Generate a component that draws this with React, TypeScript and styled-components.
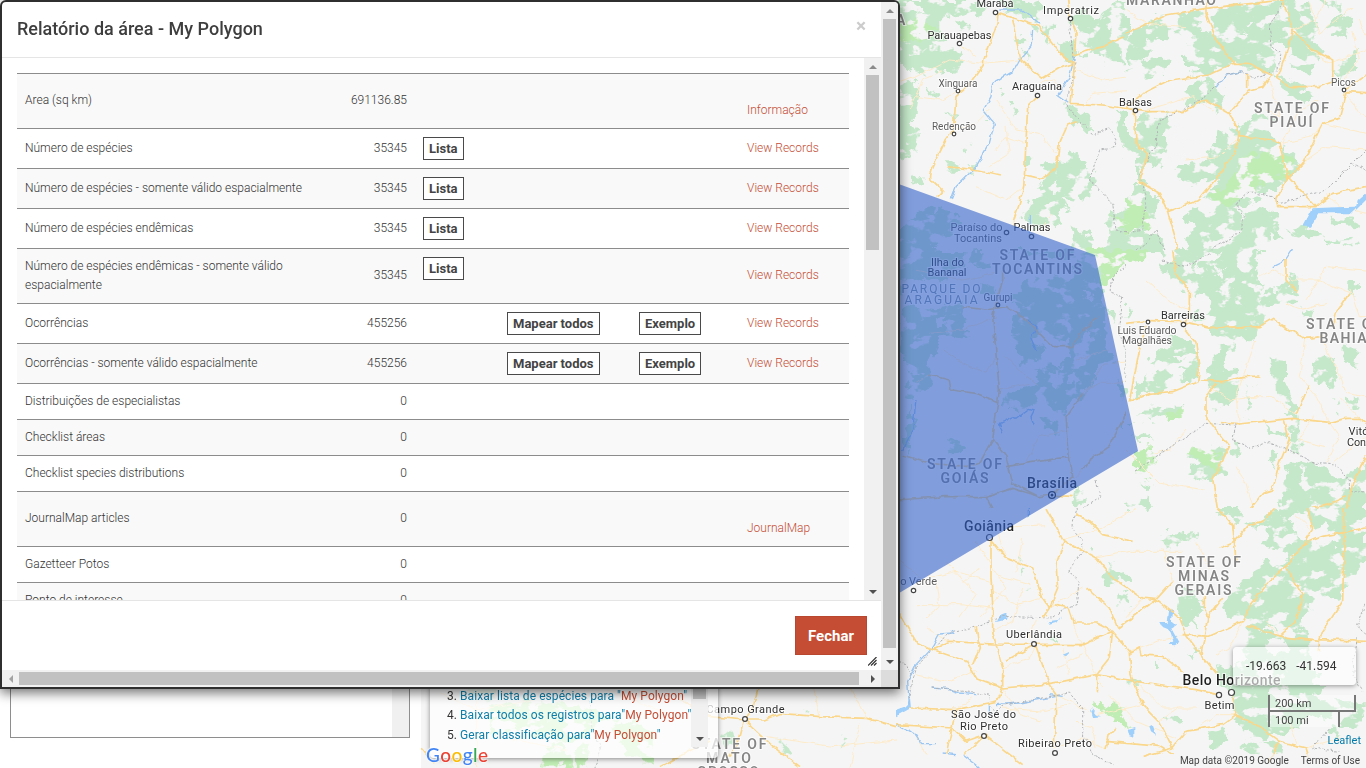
import React from "react";
import styled, { createGlobalStyle } from "styled-components";

const Global = createGlobalStyle`
  * { box-sizing: border-box; }
  body { margin: 0; overflow: hidden; background: #fff; font-family: Roboto, "Liberation Sans", sans-serif; color: #3e3e3e; }
`;

/* ---------- page ---------- */
const Page = styled.div`
  position: relative;
  display: flex;
  width: 1366px;
  height: 768px;
  overflow: hidden;
`;
const SidePanel = styled.aside`
  display: flex;
  align-items: flex-end;
  width: 421px;
  padding: 0 11px 30px 10px;
  background: #fff;
`;
const LayerList = styled.div`
  display: flex;
  justify-content: flex-end;
  width: 400px;
  height: 300px;
  border: 1px solid #8e8e8e;
`;
const LayerTrack = styled.div`
  width: 17px;
  background: #f0f0f0;
`;
const MapPane = styled.main`
  position: relative;
  flex: 1;
  overflow: hidden;
`;
const MapCanvas = styled.svg`
  display: block;
  width: 945px;
  height: 768px;
  font-family: Roboto, sans-serif;
`;

/* ---------- map controls ---------- */
const StepsPanel = styled.div`
  position: absolute;
  left: 9px;
  bottom: 10px;
  display: flex;
  justify-content: space-between;
  width: 288px;
  height: 130px;
  padding: 0 10px 11px 17px;
  background: rgba(255, 255, 255, 0.72);
  border-radius: 4px;
  box-shadow: 0 1px 5px rgba(0, 0, 0, 0.45);
`;
const Steps = styled.ol`
  display: flex;
  flex-direction: column;
  justify-content: flex-end;
  margin: 0;
  padding: 0 0 2px;
  list-style: none;
  font-size: 12px;
  line-height: 19.5px;
  letter-spacing: 0.07px;
  color: #333;
  white-space: nowrap;
`;
const StepLink = styled.span`
  color: #0e7ea9;
`;
const AreaName = styled.span`
  color: #c44d34;
`;
const Num = styled.span`
  display: inline-block;
  width: 13px;
`;
const Position = styled.div`
  position: absolute;
  left: 812px;
  top: 647px;
  display: flex;
  align-items: center;
  gap: 10px;
  width: 123px;
  height: 38px;
  padding-left: 13px;
  background: rgba(255, 255, 255, 0.62);
  border-radius: 4px;
  box-shadow: 0 1px 5px rgba(0, 0, 0, 0.4);
  font-size: 12px;
  color: #333;
`;
const Scale = styled.div`
  position: absolute;
  left: 847px;
  top: 695px;
  font: 11px/11px Roboto, sans-serif;
  color: #444;
`;
const ScaleLine = styled.div<{ $w: number; $first?: boolean }>`
  width: ${(p) => p.$w}px;
  height: ${(p) => (p.$first ? 17 : 15)}px;
  padding: ${(p) => (p.$first ? "3px 5px" : "3px 5px")};
  border: 2px solid #777;
  border-width: ${(p) => (p.$first ? "0 2px 2px" : "0 2px 0")};
  background: rgba(255, 255, 255, 0.4);
`;
const Logo = styled.div`
  position: absolute;
  left: 5px;
  bottom: 1px;
  font: 500 19px/24px Lato, sans-serif;
  letter-spacing: 0.45px;
  text-shadow: 0 0 2px #fff, 0 0 2px #fff, 0 0 2px #fff;
`;
const Tint = styled.span<{ $c: string }>`
  color: ${(p) => p.$c};
`;
const Credits = styled.div`
  position: absolute;
  right: 0;
  bottom: 0;
  display: flex;
  flex-direction: column;
  align-items: flex-end;
`;
const LeafletLink = styled.div`
  padding: 0 5px 3px;
  font-size: 11px;
  line-height: 20px;
  color: #0078a8;
`;
const Terms = styled.div`
  display: flex;
  gap: 12px;
  height: 14px;
  padding: 0 6px;
  font-size: 10px;
  line-height: 13px;
  background: rgba(245, 245, 245, 0.65);
  color: #444;
`;

/* ---------- dialog ---------- */
const Dialog = styled.section`
  position: absolute;
  left: 0;
  top: 0;
  display: grid;
  grid-template-columns: 879px 17px;
  grid-template-rows: 668px 17px;
  width: 900px;
  height: 689px;
  border: 2px solid #2f2f2f;
  border-radius: 6px 6px 0 0;
  background: #fff;
  box-shadow: 0 4px 12px rgba(0, 0, 0, 0.55);
  overflow: hidden;
`;
const Content = styled.div`
  display: flex;
  flex-direction: column;
  min-width: 0;
`;
const Header = styled.header`
  display: flex;
  justify-content: space-between;
  height: 56px;
  padding: 15px;
  border-bottom: 1px solid #e5e5e5;
`;
const Title = styled.h4`
  margin: 0;
  font-size: 18px;
  font-weight: 500;
  line-height: 24px;
  color: #3e3e3e;
`;
const Close = styled.button`
  border: 0;
  padding: 0;
  height: 18px;
  background: none;
  font: 700 19px/18px Roboto, sans-serif;
  color: #ccc;
`;
const Body = styled.div`
  display: grid;
  grid-template-columns: 862px 17px;
  height: 542px;
`;
const Report = styled.div`
  height: 542px;
  padding: 15px;
  overflow: hidden;
`;
const Row = styled.div<{ $h: number; $odd: boolean }>`
  display: grid;
  grid-template-columns: 318px 80px 84px 132px 108px 110px;
  height: ${(p) => p.$h}px;
  border-top: 1px solid #8c8c8c;
  background: ${(p) => (p.$odd ? "#f9f9f9" : "#fff")};
`;
const Cell = styled.div<{ $right?: boolean; $low?: boolean }>`
  display: flex;
  align-items: center;
  justify-content: ${(p) => (p.$right ? "flex-end" : "flex-start")};
  padding: ${(p) => (p.$low ? "19px 8px 0" : "0 8px 1px")};
  font-size: 12px;
  font-weight: 300;
  line-height: 19px;
  color: #333;
`;
const ActionCell = styled.div`
  padding: 8px;
`;
const RecordLink = styled.span`
  color: #c44d34;
`;
const SmallButton = styled.button`
  display: block;
  height: 23px;
  padding: 0 5px;
  border: 1px solid #4a4a4a;
  background: #fff;
  font: 700 13px/21px Roboto, sans-serif;
  color: #444;
  white-space: nowrap;
`;
const Footer = styled.footer`
  display: flex;
  flex: 1;
  align-items: flex-start;
  justify-content: flex-end;
  padding: 15px 14px 0;
  border-top: 1px solid #e5e5e5;
`;
const CloseButton = styled.button`
  width: 72px;
  height: 39px;
  padding: 0;
  border: 1px solid #b9462f;
  background: #c44d34;
  font: 700 15px Roboto, sans-serif;
  color: #fff;
`;
const Track = styled.div<{ $row?: boolean }>`
  display: flex;
  flex-direction: ${(p) => (p.$row ? "row" : "column")};
  align-items: center;
  background: #f1f1f1;
`;
const ArrowBox = styled.div<{ $end?: boolean }>`
  display: flex;
  align-items: center;
  justify-content: center;
  width: 17px;
  height: 17px;
  margin-left: ${(p) => (p.$end ? "auto" : 0)};
`;
const Thumb = styled.div<{ $w: number; $h: number }>`
  width: ${(p) => p.$w}px;
  height: ${(p) => p.$h}px;
  background: #c1c1c1;
`;
const Spring = styled.div`
  flex: 1;
`;
const Corner = styled.div`
  background: #dcdcdc;
`;
const Grip = styled.svg`
  position: absolute;
  left: 866px;
  top: 655px;
`;

const arrows = {
  up: "M0 6L4 2L8 6Z",
  down: "M0 2L4 6L8 2Z",
  left: "M6 0L2 4L6 8Z",
  right: "M2 0L6 4L2 8Z",
};
const Arrow = ({ dir, fill = "#505050" }: { dir: keyof typeof arrows; fill?: string }) => (
  <svg width="8" height="8"><path d={arrows[dir]} fill={fill} /></svg>
);

/* ---------- map drawing ---------- */
type TileData = {
  x: number; y: number; w: number; h: number;
  green: string; light?: string; clear?: string; water?: string; river?: string; road: string; minor: string; border?: string;
};

const tiles: TileData[] = [
  {
    x: 896, y: 0, w: 690, h: 750,
    green: "M0 0H230L270 20L240 45L180 55L150 40L130 50L130 90L190 150L200 190L180 215L140 210L60 220L20 190L0 180ZM0 240L40 240L70 260L60 340L40 360L70 400L60 450L30 480L0 500ZM310 0H400L440 20L425 60L370 50L330 35ZM540 30L580 40L600 60L640 20L720 0V130L670 150L690 190L640 190L600 160L550 165L530 120L560 90L520 60ZM490 130L540 120L540 190L500 180ZM180 65L220 70L215 95L190 85ZM90 262L125 275L110 290ZM310 265L335 275L320 290ZM340 300L370 320L355 345ZM200 445L225 435L215 460ZM50 515L78 525L70 545L45 540ZM385 465L415 470L400 490L385 490ZM410 75L470 80L460 130L430 100ZM450 480L510 490L520 450L560 470L600 560L570 600L500 590L520 620L490 650L480 680L410 690L380 650L410 590L450 540L435 510ZM530 680L560 700L600 690L600 770L540 740ZM500 300L560 340L600 380L570 400L520 350ZM660 330L720 350V640L690 620L700 500L670 400ZM640 630L720 640V780H600L640 720ZM260 340L275 355L265 365ZM340 110L375 105L385 130L350 130ZM380 155L405 170L390 190ZM150 340L180 345L170 370ZM150 490L240 490L230 515L170 515ZM0 700L60 640L130 620L200 650L160 700L60 780H0Z",
    light: "M10 75L60 60L130 85L90 120L10 115ZM640 640L720 655V700L670 690Z",
    clear: "M620 60L650 70L630 90ZM560 110L580 120L570 135ZM60 20L90 30L70 45ZM460 560L490 540L480 580Z",
    river: "M410 90L405 140L370 180L350 215L290 250L285 290L262 330L295 370L280 430L240 500L180 560L165 600M535 170L520 230L485 285L520 310M310 30L380 30L430 70M400 640V700",
    road: "M305 40C310 90 260 160 262 195L225 250L180 290L172 390L150 420C120 480 90 530 110 545L140 575L125 590M305 40L370 60L430 80L460 120L500 170L535 190L530 260L525 310L620 315L720 330M515 0L520 40L540 100L535 165L620 140L720 95M345 50L375 180L440 235L490 205L535 190M425 290L395 320L385 530C385 600 350 650 350 680M385 525L435 535L480 510L490 430L515 375L540 365M150 500L250 510L315 525",
    minor: "M0 250L60 230L160 180L260 190L370 180M190 270L140 300L60 290M300 300L360 390L430 400L480 460M330 380L340 460L280 500M385 430L330 410L300 450M540 210L620 240L700 230M560 320L590 280L720 270M180 390L240 370L280 330M430 250L470 240L500 270M190 130L240 170M140 215L80 240L40 330M380 560L330 600L240 560M470 640L440 680",
    border: "M520 60L530 160L540 190L510 310L540 350L590 405L640 385L660 420L650 445L610 450L580 540L650 610L660 690L720 700",
  },
  {
    x: 1126, y: 0, w: 720, h: 750,
    green: "M0 110L90 50L240 30L480 0H540L570 70L560 130L590 160L560 220L500 210L490 150L455 150L430 230L330 190L240 225L200 230L220 205L180 200L180 110L160 100L130 100L100 130L60 120L70 170L20 200L0 150ZM610 60L640 30L675 60L660 120L630 100L600 110L590 80ZM610 190L690 150V220L640 225ZM440 210L520 260L570 280L540 310L480 280ZM170 270L250 230L300 290L280 330L240 300L190 310ZM0 215L60 180L140 175L120 215L60 230ZM340 390L400 330L440 360L430 400L480 440L520 500L490 540L400 600L330 620L350 700L400 720V780H200L180 720L200 690L170 650L240 600L280 530L190 560L140 520L160 490L220 500L250 440L260 410L330 370ZM30 340L90 340L130 330L140 360L110 400L130 420L100 510L60 480L40 540L70 570L100 600L90 660L40 700L0 660V600L30 560L30 480L0 440V400L30 420ZM400 620L460 640L450 690L480 720L430 705L450 760L390 780H320L350 640ZM480 690L560 680L600 720L680 710L690 740L560 720ZM610 650L680 660L690 680L620 670ZM0 690L80 700L120 740L100 780H0ZM570 0H640V30L600 25Z",
    light: "M340 470L450 450L500 480L490 520L400 560L300 620L250 590L300 560ZM0 590L60 620L80 680L0 690Z",
    clear: "M220 60L260 55L260 90L225 95ZM360 70L380 75L370 85ZM140 370L250 380L265 440L200 490L130 490ZM200 560L240 540L230 590L190 600ZM440 130L465 125L470 150L445 155ZM350 100L370 95L360 110ZM350 225H410L400 260L370 268Z",
    water: "M720 578L695 600L690 620L630 622L560 625L530 680L555 680L580 640L680 640L720 600Z",
    river: "M350 215L300 225L270 265M500 745L480 780",
    road: "M0 100L120 45L240 25L380 10L470 0M240 0V40L270 120L325 190L250 225L130 240L60 275L0 325M325 190L370 190L435 225L410 260L370 270L310 340L240 300L170 335L60 335L0 325M470 0L500 90L480 160L455 235L490 260L580 260L620 245V180L560 150L500 90M365 225V265M310 340L340 400L330 450L270 540L220 600L125 635L100 580L40 545L65 465L30 430L25 330M125 635L150 720V780M340 410L440 420L460 430L485 530L570 620L455 620L450 600L485 535L530 490L590 370L640 355L660 275L720 278M570 620L620 580L720 560M660 265L720 225",
    minor: "M500 90L570 60L600 0M640 250L700 180L680 90M540 480L600 440L720 450M470 430L560 410L590 370L720 400M580 300L520 330L470 430M260 330L200 290L60 330M0 30L60 70L180 80M540 140L610 190L720 150M330 420L280 470L180 480M600 580L640 620L720 640M660 280L700 340L720 350M550 10L580 100L680 20M430 240L460 350L420 330M700 60L720 110",
    border: "M470 10L430 80L435 140L465 160L455 210L380 235L350 215L300 225L240 290L170 330L100 360L90 430L40 530L60 580L50 690L0 700M215 770L340 700L355 650L330 610L370 575L440 590L460 610L600 570L680 490L720 450M680 490L720 510M90 690L130 780M0 770L60 730L90 690",
  },
  {
    x: 896, y: 250, w: 690, h: 774,
    green: "M0 0H210L200 60L120 100L60 80L0 140ZM20 160L130 180L190 160L230 270L140 260L100 340L100 400L60 450L30 440L50 380L20 300ZM300 0H600L630 100L560 80L520 30ZM340 150L400 90L560 60L610 100L630 180L620 280L660 330L600 340L600 400L560 430L500 500L440 460L380 480L320 470L340 430L420 400L430 350L380 350L370 290L340 230L380 190ZM640 180L660 190L655 235ZM160 560L200 590L160 620ZM680 520L720 490V570L690 550ZM540 710L570 715L560 770L530 760ZM430 500L500 520L460 540ZM40 470L60 520L30 620L20 560ZM230 0H290L280 60L220 50ZM250 100L300 120L260 150ZM440 520L520 510L490 570ZM660 380L690 430L680 460Z",
    light: "M570 0H720L690 30L640 100L625 112L600 15Z",
    clear: "M430 290L460 270L520 280L530 320L490 350L440 340ZM560 120L590 130L570 160ZM120 200L160 200L140 220ZM450 370L490 360L480 420L460 400ZM520 370L545 380L530 420ZM560 240L590 250L570 280Z",
    river: "M320 550L310 520L350 500L360 505L400 475L415 480L405 500L415 525M395 210L420 230L405 265L420 300M60 450L50 540L20 600",
    road: "M320 60V90L290 200L310 420L290 570L330 620L350 700L430 740L468 735M200 170L270 180L330 170L390 210L470 290L530 290L550 250L610 200M100 375L160 390L165 420L240 430L305 455M290 570L250 640L220 650L100 640L20 615M330 650L390 640L520 620L510 500L560 430M0 750L150 740L270 740L350 715L430 740M560 660L580 630L640 590L690 490L720 450M520 620L530 680L468 735M720 360L705 450M270 740L290 780M468 735L530 740",
    minor: "M300 320L270 370L200 340L140 300M330 320L380 370L430 410M560 430L600 400L670 400L720 370M560 450L620 340L720 330M300 200L200 240L100 250M100 375L60 400M310 420L400 400M390 640L430 560L520 540M560 660L520 700L460 690M640 300L540 330M60 60L200 90L300 70",
    border: "M720 20L650 80L645 130L680 140L670 250L690 300L690 400M600 690L615 740L560 775",
  },
  {
    x: 1126, y: 250, w: 720, h: 774,
    green: "M110 0H390L400 100L410 140L420 120L500 110L520 150L420 170L400 250L380 270L360 240L230 230L180 190L260 180L250 150L190 130L110 60ZM490 70L520 75L515 115L480 120ZM670 90L690 100L688 140L668 130ZM90 320L150 260L210 280L220 380L140 410L30 440L20 400L60 380L110 360L70 340ZM240 230L400 230L360 280L340 270L310 310L300 350L340 370L340 420L320 470L270 480L240 460L260 400L240 370L280 290ZM440 320L480 330L480 400L510 460L520 500L520 610L490 590L500 500L450 420ZM570 320L630 330L640 390L620 440L580 400L560 380ZM650 280L700 300L690 370L650 330ZM170 620L230 580L310 600L300 650L260 700L180 670L220 640ZM480 650L500 625L560 640L600 660L650 690L720 640V780H460L470 700ZM20 520L70 470L170 470L150 500L90 510ZM375 400L382 410L370 500H360ZM420 520L470 550L470 570L430 545ZM440 600L455 610L440 650L430 630ZM610 420L640 450L640 490ZM660 440L700 450L690 480L660 470ZM310 590L345 580L335 630L320 620ZM530 170L570 190L560 210L530 200ZM20 560L60 550L90 570L30 570ZM50 700L80 710L60 730ZM20 740L70 750L50 780H0ZM0 160L0 210L20 180Z",
    light: "M0 0H80L50 30L0 35ZM30 600L80 590L85 650L60 690L20 650ZM110 500L170 475V495L120 510ZM180 610L220 590L290 610L280 660L220 640Z",
    clear: "M240 10L290 5L250 40L190 50ZM270 60L300 50L290 90ZM150 320L180 310L170 335ZM130 370L180 350L170 385ZM520 650L530 640L525 700ZM100 100L160 120L140 160L90 150Z",
    river: "M500 0L480 30L440 50",
    road: "M140 0L150 70L190 120L190 190L172 225M0 220L70 212L170 215L250 232L400 230L440 205L490 240L540 265L590 260M480 30V90L510 125M175 235L210 280L220 360L215 395L140 425L70 430L10 455L40 300L60 230M225 390L300 395L350 380L400 378M270 400L240 440V500L310 590L260 690L275 780M285 515L340 522L500 505L610 517L660 505L700 505L720 520M510 495L548 405M475 510L490 570L460 640L440 720L410 730L370 780M670 130L630 190L620 240M720 620L680 700L660 780M660 740L600 765L540 780",
    minor: "M400 80L440 60L500 90L580 90L620 110L680 130M590 260L600 300L640 370L660 430L720 440M610 517L570 440L520 380L540 265M480 160L530 180L600 160M510 495L440 440L350 440M340 522L330 440L390 270M700 505L640 440M60 90L140 160L190 180M180 540L130 600L80 610M330 650L360 700L380 770M600 640L640 560L610 517M540 150L600 50L720 60M0 600L100 700L240 720M620 640L720 560M250 410L310 450L400 440M670 110L700 200L720 200M560 500L520 570L600 590",
    border: "M110 30L180 50L250 10M30 660L60 640L240 520L330 525L320 570L370 595L430 575L500 605L570 640L630 645L670 690V720L720 730",
  },
  {
    x: 896, y: 508, w: 1410, h: 780,
    green: "M1150 0H1410V30L1380 40L1410 60V150L1360 210L1340 260L1260 280L1220 340L1190 400L1150 370L1100 360L1070 380L1040 330L1000 330L990 300L1000 260L1040 230L1100 160L1160 170L1180 130L1100 110L1120 60L1040 50L1110 30ZM1040 400L1060 360L1180 390L1220 350L1240 400L1240 470L1300 540L1240 560L1300 600L1200 660L1120 690L1050 680L1010 620L1000 480L1050 470ZM1240 580H1410V650L1330 660L1280 630ZM780 75L850 80L910 70L900 100L850 110L810 130L800 100ZM840 270L890 240L920 300L890 360L850 330ZM670 250L695 260L690 310L670 300ZM630 180L650 160L690 165L700 220L670 210L640 230L620 220ZM440 390L490 390L480 405ZM380 235L395 240L385 270ZM930 670L990 650L1000 700L950 720ZM800 620L860 625L840 660ZM1030 720L1060 690L1160 700L1150 745L1080 740ZM780 450L800 480L780 490ZM870 440L900 430L890 450ZM1300 660L1320 650L1330 700ZM960 0H1040L1030 40L990 20ZM370 150L380 155L375 165ZM380 180L395 190L380 205ZM960 480L1000 470V550L970 530ZM590 110L605 120L600 130ZM700 520L740 515L730 540L705 535Z",
    light: "M590 580L680 600L700 660L640 630Z",
    clear: "M1120 400L1160 390L1180 430L1120 440ZM1310 110L1330 120L1320 130ZM1140 540L1170 545L1160 580L1120 570ZM1180 20L1230 10L1250 60L1290 50L1330 90L1260 110L1200 90Z",
    water: "M820 305L832 310L828 340L840 350L825 360L850 405L840 412L818 410L832 400L820 365L795 355L790 345L815 345ZM310 325L335 315L330 335L300 342ZM455 340L490 335L495 325L480 345L460 350ZM500 440L525 430L510 445ZM0 605L30 595L42 570L45 600L0 625ZM585 600L600 620L615 625L590 628ZM695 665L715 660L715 690L700 685ZM760 655L770 650L780 680L765 670Z",
    river: "M40 590L35 520L60 470L110 415L130 378L170 375M165 365L175 380M110 540L160 545L190 555L240 560M280 590V620M300 590L370 585L480 565M0 650L60 680L80 710L120 710M140 735L180 740M200 740L250 780M460 560L500 565M400 0V30",
    road: "M285 100V210L290 290V370L320 480V540M285 95L330 150L410 180L440 270L460 300L440 330M450 0L500 95L600 150L650 210L740 270L780 275L850 330L870 380L915 440L965 500M505 95L480 170L485 240L460 300M470 290L520 300L535 345L600 345L650 370L705 435L730 420L735 440L800 445L860 490M575 240L640 300L665 360L780 275L830 220M10 315L60 400L110 425L210 460L240 510L320 540L440 530L500 520L600 500L720 520L900 545L965 560M110 425L160 400L290 408L560 410L650 370L640 450L600 500L605 550M240 355L250 420L230 470M420 415L460 530L480 560L475 720M415 410L330 460M700 430L705 500L740 590L790 640L830 720M540 20L580 40L620 80L710 100M935 330L925 300V260M860 380L940 385L1040 340L1050 310L1120 220L1170 175L1220 260L1200 340L1150 385L1050 350M915 440L935 330L980 270M1170 175L1220 110L1280 85L1410 60M1235 0L1250 60L1220 110M1340 0L1345 60L1340 280L1280 370L1270 400L1150 385M1270 395L1410 400M1270 400V430M965 0L1010 50L1015 100L1020 160M1015 100L970 120M1140 0L1100 40L1060 50L1015 100M40 600L180 605L300 580L320 540M180 605L150 740M0 650L170 660L210 700L265 680M205 740L265 680L380 770M1010 560L1020 620L980 650L900 665L870 670L830 720L740 745M1020 620L1080 650L1150 700L1230 720L1240 750M630 720L640 680L660 660M630 700L790 715L830 740M1150 700L1120 760",
    minor: "M100 210L180 190L280 220M150 160L240 260L190 330M60 290L190 290L290 300M290 250L360 290L440 270M330 150L300 60L450 50M120 220L130 300L90 330M300 200L400 230M500 95L620 60L720 0M600 150L700 130L860 130M460 300L560 240M320 480L400 450L420 415M240 490L150 520L60 500M320 540L370 620L440 640M480 560L600 620L740 590M475 720L560 690L630 720M560 410L620 540M720 520L800 600L900 600M740 270L690 330M830 220L800 120M870 380L780 400L700 430M480 480L560 440M160 400L90 360M1040 340L1000 420L960 440M1150 385L1110 340M1240 60L1200 20M1020 620L960 620L900 665M790 640L850 600M0 150L100 230M180 605L230 570M60 680L90 740M360 190L380 90M420 330L400 390M530 345L560 410M520 590L450 610L320 600M600 720L590 660L540 640M900 100L940 180M240 100L330 240L250 330M200 220L250 180M380 240L350 340L290 370M500 420L520 500M640 560L720 640L840 690M1230 720L1330 690M1180 640L1200 710",
    border: "M545 0L525 60L560 100L560 130L515 190L550 220L540 290L510 300L470 330L320 325L250 355L170 370L110 420L60 480L40 570M110 540L160 545L280 560L280 590L300 610L330 590L520 555L560 600L560 680L590 740L650 770M0 460L30 470L45 500M1410 290L1385 350L1410 380M1380 390L1370 500L1400 550M1300 660L1250 720L1330 730",
  },
  {
    x: 400, y: 670, w: 1488, h: 294,
    green: "M970 190L1000 180L1010 220L980 240ZM1140 210L1170 240L1150 260ZM1200 130L1225 120L1220 140ZM200 40L290 50L280 90L210 80ZM1320 200L1350 210L1330 230Z",
    light: "M270 110L340 95L420 95L560 110L640 150L580 170L560 200L480 210L350 180L270 190ZM420 250L480 210L520 290H420ZM640 160L700 150L760 180L750 280L680 260ZM520 240L570 220L560 290H530Z",
    road: "M60 230L100 280M780 290L930 210M930 140L1035 150L1090 150L1140 130L1260 140L1400 145L1488 170M1075 50L1060 110L1035 145L1020 200L990 260M1035 150L1120 230L1200 290M840 90L930 140",
    minor: "M230 0V294M120 70L230 120L400 90M1260 140L1240 50M1100 200L1300 230L1488 210M1320 0L1400 145M300 200L500 240M1380 160L1350 294M620 60L800 130",
    border: "M550 0L555 70L570 110L575 170L600 230L585 294",
  },
];

const place = (t: TileData) => `translate(${t.x} ${t.y}) scale(.33333)`;

const Land = ({ t, i }: { t: TileData; i: number }) => (
  <g transform={place(t)} clipPath={`url(#tile${i})`}>
    <path d={t.green} fill="#c5e8ca" />
    {t.light && <path d={t.light} fill="#c0edb4" />}
  </g>
);
const Clearing = ({ t }: { t: TileData }) => (
  <g transform={place(t)}>{t.clear && <path d={t.clear} fill="#f5f5f5" />}</g>
);
const Lines = ({ t, i }: { t: TileData; i: number }) => (
  <g transform={place(t)} clipPath={`url(#tile${i})`} fill="none" strokeLinejoin="round">
    <path d={t.minor} stroke="#fdebc9" strokeWidth="3" />
    {t.water && <path d={t.water} fill="#9fd0fc" />}
    {t.river && <path d={t.river} stroke="#9cc7f2" strokeWidth="4" />}
    {t.border && <path d={t.border} stroke="#b1b3b5" strokeWidth="3" strokeDasharray="7 5" />}
    <path d={t.road} stroke="#fad78a" strokeWidth="5" />
  </g>
);

/* text, centre x, baseline, size, width, kind */
type Label = [string, number, number, number, number, ("town" | "faint" | "city" | "state" | "park")?];
const labels: Label[] = [
  ["Marabá", 995, 7, 11, 37], ["Imperatriz", 1071, 14, 11, 56], ["Parauapebas", 959.5, 39, 11, 64],
  ["Xinguara", 958, 87, 10, 39, "faint"], ["Araguaína", 1037, 90, 11, 50], ["Redenção", 954, 130, 10, 44, "faint"],
  ["Balsas", 1135.5, 106, 11, 33], ["MARANHÃO", 1171, 5, 14, 90, "state"], ["A", 901, 25, 14, 10, "state"],
  ["STATE OF", 1291.5, 113, 14, 75, "state"], ["PIAUÍ", 1291, 127, 14, 43, "state"], ["Picos", 1343.5, 86, 10, 25, "faint"],
  ["Paraíso do", 976.5, 231, 11, 52, "faint"], ["Tocantins", 978, 242, 11, 48, "faint"], ["Palmas", 1032, 231, 11, 37],
  ["STATE OF", 1037, 260, 14, 75, "state"], ["TOCANTINS", 1037, 274, 14, 90, "state"],
  ["Ilha do", 947.5, 266, 11, 33], ["Bananal", 947, 276, 11, 39],
  ["PARQUE DO", 941, 293, 12, 79, "park"], ["ARAGUAIA", 941, 304, 12, 73, "park"], ["Gurupi", 998, 301, 10, 29, "faint"],
  ["Luis Eduardo", 1147, 334, 10.5, 59, "faint"], ["Magalhães", 1147, 344, 10.5, 50, "faint"], ["Barreiras", 1183, 319, 11, 44],
  ["STATE OF", 1343.5, 329, 14, 75, "state"], ["BAHIA", 1343, 343, 14, 47, "state"],
  ["STATE OF", 964.5, 469, 14, 75, "state"], ["GOIÁS", 964.5, 483, 14, 48, "state"],
  ["Brasília", 1052, 488, 14, 50, "city"], ["Goiânia", 989, 531, 14, 50, "city"], ["Rio Verde", 914, 585, 11, 46, "faint"],
  ["Uberlândia", 1034, 638, 11, 56], ["STATE OF", 1203.5, 567, 14, 75, "state"], ["MINAS", 1203.5, 581, 14, 51, "state"], ["GERAIS", 1203, 595, 14, 57, "state"],
  ["Vitória", 1365, 435, 11, 33], ["Conquista", 1371, 446, 11, 48],
  ["Belo Horizonte", 1231.5, 685, 14, 98, "city"], ["Betim", 1219.5, 709, 11, 30],
  ["São José do", 983.5, 718, 11, 65], ["Rio Preto", 984, 730, 11, 48], ["Ribeirao Preto", 1055, 747, 11, 74], ["Campo Grande", 745.5, 713, 11, 78],
  ["STATE OF", 729, 749, 14, 75, "state"], ["MATO", 728.5, 763, 14, 45, "state"], ["GROSSO", 728, 777, 14, 62, "state"],
];
const labelColor = { town: "#2f2f2f", faint: "#5c5c5c", city: "#1f1f1f", state: "#858585", park: "#7d939e" };

const dots: [number, number, number][] = [
  [995.5, 12.5, 2.2], [1070.5, 18.5, 2.2], [959.5, 43.5, 2.2], [958, 91, 1.8], [1037.5, 95.5, 2.2], [954, 134, 1.8],
  [1135.5, 110.5, 2.2], [1344, 90, 1.8], [1006.5, 232.5, 2.2], [1031.5, 236.5, 2.2], [998, 305, 1.8], [1148, 322, 1.8], [1183.5, 324.5, 2.2],
  [989.5, 537.5, 3], [913.5, 590.5, 2.2], [1034, 644, 2.4], [1219, 695, 2.6], [1231.5, 692.5, 3], [984, 736, 2.4], [1055, 753, 2.4], [745, 719, 2.4],
];

const MapDrawing = () => (
  <MapCanvas viewBox="421 0 945 768">
    <defs>
      <filter id="ragged" x="421" y="0" width="945" height="768" filterUnits="userSpaceOnUse" colorInterpolationFilters="sRGB">
        <feTurbulence type="fractalNoise" baseFrequency="0.09" numOctaves="3" seed="4" result="edge" />
        <feDisplacementMap in="SourceGraphic" in2="edge" scale="17" xChannelSelector="R" yChannelSelector="G" result="land" />
        <feTurbulence type="fractalNoise" baseFrequency="0.055 0.075" numOctaves="4" seed="12" />
        <feColorMatrix values="0 0 0 0 0  0 0 0 0 0  0 0 0 0 0  14 0 0 0 -5.2" result="patches" />
        <feComposite in="land" in2="patches" operator="in" />
      </filter>
      <filter id="wander" x="421" y="0" width="945" height="768" filterUnits="userSpaceOnUse" colorInterpolationFilters="sRGB">
        <feTurbulence type="fractalNoise" baseFrequency="0.12" numOctaves="2" seed="9" />
        <feDisplacementMap in="SourceGraphic" scale="5" xChannelSelector="R" yChannelSelector="G" />
      </filter>
      {tiles.map((t, i) => <clipPath id={`tile${i}`} key={i}><rect width={t.w} height={t.h} /></clipPath>)}
    </defs>
    <rect x="421" width="945" height="768" fill="#f5f5f5" />
    <g filter="url(#ragged)">
      {tiles.map((t, i) => <Land key={i} t={t} i={i} />)}
      {tiles.map((t, i) => <Clearing key={i} t={t} />)}
    </g>
    <g filter="url(#wander)">{tiles.map((t, i) => <Lines key={i} t={t} i={i} />)}</g>
    {dots.map(([x, y, r]) => <circle key={`${x}-${y}`} cx={x} cy={y} r={r} fill="#fff" stroke="#444" strokeWidth="1.2" />)}
    <circle cx="1052" cy="495" r="3.4" fill="#fff" stroke="#222" strokeWidth="1.3" />
    <circle cx="1052" cy="495" r="1.5" fill="#222" />
    {labels.map(([text, x, y, size, width, kind = "town"], i) => (
      <text key={i} x={x - width / 2} y={y} fontSize={size} textLength={width}
        fontWeight={kind === "state" ? 600 : kind === "city" ? 500 : 400}
        fill={labelColor[kind]} stroke="#fff" strokeOpacity=".7" strokeWidth="2" paintOrder="stroke">{text}</text>
    ))}
    <path d="M800 148L900 184.500L1095 255L1138 451L900 592.500L800 652Z" fill="#3462cb" fillOpacity=".6" />
  </MapCanvas>
);

/* ---------- data ---------- */
type Entry = { label: string; value: string; h: number; list?: boolean; map?: boolean; link?: string; low?: boolean };
const entries: Entry[] = [
  { label: "Area (sq km)", value: "691136.85", h: 55, link: "Informação", low: true },
  { label: "Número de espécies", value: "35345", h: 40, list: true, link: "View Records" },
  { label: "Número de espécies - somente válido espacialmente", value: "35345", h: 40, list: true, link: "View Records" },
  { label: "Número de espécies endêmicas", value: "35345", h: 40, list: true, link: "View Records" },
  { label: "Número de espécies endêmicas - somente válido espacialmente", value: "35345", h: 55, list: true, link: "View Records" },
  { label: "Ocorrências", value: "455256", h: 40, map: true, link: "View Records" },
  { label: "Ocorrências - somente válido espacialmente", value: "455256", h: 40, map: true, link: "View Records" },
  { label: "Distribuições de especialistas", value: "0", h: 36 },
  { label: "Checklist áreas", value: "0", h: 36 },
  { label: "Checklist species distributions", value: "0", h: 36 },
  { label: "JournalMap articles", value: "0", h: 55, link: "JournalMap", low: true },
  { label: "Gazetteer Potos", value: "0", h: 36 },
  { label: "Ponto de interesse", value: "0", h: 36 },
];
const steps = [
  ["3.", "Baixar lista de espécies para "],
  ["4.", "Baixar todos os registros para"],
  ["5.", "Gerar classificação para"],
];

const ReportDialog = () => (
  <Dialog>
    <Content>
      <Header>
        <Title>Relatório da área - My Polygon</Title>
        <Close>×</Close>
      </Header>
      <Body>
        <Report>
          {entries.map((e, i) => (
            <Row key={e.label} $h={e.h} $odd={i % 2 === 0}>
              <Cell>{e.label}</Cell>
              <Cell $right>{e.value}</Cell>
              <ActionCell>{e.list && <SmallButton>Lista</SmallButton>}</ActionCell>
              <ActionCell>{e.map && <SmallButton>Mapear todos</SmallButton>}</ActionCell>
              <ActionCell>{e.map && <SmallButton>Exemplo</SmallButton>}</ActionCell>
              <Cell $low={e.low}>{e.link && <RecordLink>{e.link}</RecordLink>}</Cell>
            </Row>
          ))}
        </Report>
        <Track>
          <ArrowBox><Arrow dir="up" fill="#8b8b8b" /></ArrowBox>
          <Thumb $w={13} $h={175} />
          <Spring />
          <ArrowBox><Arrow dir="down" /></ArrowBox>
        </Track>
      </Body>
      <Footer><CloseButton>Fechar</CloseButton></Footer>
    </Content>
    <Track>
      <ArrowBox><Arrow dir="up" fill="#8b8b8b" /></ArrowBox>
      <Thumb $w={13} $h={629} />
      <Spring />
      <ArrowBox><Arrow dir="down" /></ArrowBox>
    </Track>
    <Track $row>
      <ArrowBox><Arrow dir="left" fill="#a3a3a3" /></ArrowBox>
      <Thumb $w={840} $h={13} />
      <ArrowBox $end><Arrow dir="right" /></ArrowBox>
    </Track>
    <Corner />
    <Grip width="9" height="9" stroke="#333" strokeWidth="1.2"><path d="M0 8.500L8.500 0M3 8.500L8.500 3M6 8.500L8.500 6" /></Grip>
  </Dialog>
);

const googleLetters: [string, string][] = [["G", "#4285f4"], ["o", "#ea4335"], ["o", "#fbbc05"], ["g", "#4285f4"], ["l", "#34a853"], ["e", "#ea4335"]];

export default function App() {
  return (
    <Page>
      <Global />
      <SidePanel><LayerList><LayerTrack /></LayerList></SidePanel>
      <MapPane>
        <MapDrawing />
        <StepsPanel>
          <Steps>
            {steps.map(([n, text]) => (
              <li key={n}><Num>{n}</Num><StepLink>{text}"</StepLink><AreaName>My Polygon</AreaName><StepLink>"</StepLink></li>
            ))}
          </Steps>
          <Track>
            <Thumb $w={13} $h={71} />
            <Spring />
            <ArrowBox><Arrow dir="down" /></ArrowBox>
          </Track>
        </StepsPanel>
        <Logo>{googleLetters.map(([l, c], i) => <Tint key={i} $c={c}>{l}</Tint>)}</Logo>
        <Position><span>-19.663</span><span>-41.594</span></Position>
        <Scale>
          <ScaleLine $w={88} $first>200 km</ScaleLine>
          <ScaleLine $w={72}>100 mi</ScaleLine>
        </Scale>
        <Credits>
          <LeafletLink>Leaflet</LeafletLink>
          <Terms><span>Map data ©2019 Google</span><span>Terms of Use</span></Terms>
        </Credits>
      </MapPane>
      <ReportDialog />
    </Page>
  );
}
